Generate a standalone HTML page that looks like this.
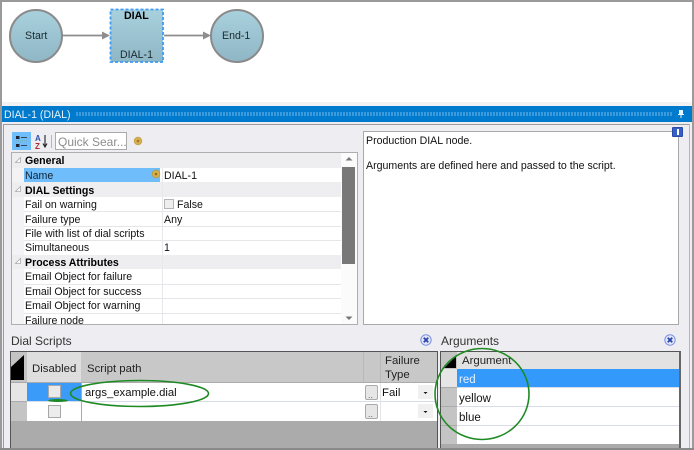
<!DOCTYPE html>
<html><head><meta charset="utf-8">
<style>
html,body{margin:0;padding:0;background:#fff}
#r{position:relative;width:694px;height:450px;overflow:hidden;background:#eeeef2;font-family:"Liberation Sans",sans-serif;font-size:10.6px;color:#111;filter:blur(.35px)}
#r div{position:absolute;box-sizing:border-box}
.t{white-space:nowrap;line-height:14px}
.b{font-weight:bold;color:#000}
.l{background:#e6e6ea;height:1px}
.h{font-size:11.4px}
</style></head><body>
<div id="r">
<div style="left:2px;top:2px;width:690px;height:100px;background:#fff"></div>
<div style="left:2px;top:102px;width:690px;height:4px;background:#f3f3f5"></div>

<svg style="position:absolute;left:0;top:0" width="694" height="106">
<defs>
<linearGradient id="g" x1="0" y1="0" x2="0" y2="1"><stop offset="0" stop-color="#a8d0dd"/><stop offset="1" stop-color="#8fb6c4"/></linearGradient>
</defs>
<circle cx="36" cy="36" r="26" fill="url(#g)" stroke="#8a8a8a" stroke-width="2"/>
<circle cx="237" cy="36" r="26" fill="url(#g)" stroke="#8a8a8a" stroke-width="2"/>
<rect x="110.500" y="9.500" width="52.500" height="52.500" fill="url(#g)" stroke="#3b9bf5" stroke-width="1.800" stroke-dasharray="3 2"/>
<path d="M63 35.500H103" stroke="#8d8d8d" stroke-width="1.800"/>
<path d="M102 31.500L110 35.500L102 39.500Z" fill="#8d8d8d"/>
<path d="M164 35.500H204" stroke="#8d8d8d" stroke-width="1.800"/>
<path d="M203 31.500L211 35.500L203 39.500Z" fill="#8d8d8d"/>
</svg>
<div class="t" style="left:25px;top:29px;color:#1c2a30">Start</div>
<div class="t b" style="left:124px;top:9px">DIAL</div>
<div class="t" style="left:120px;top:48px;color:#1c2a30">DIAL-1</div>
<div class="t" style="left:222px;top:29px;color:#1c2a30">End-1</div>

<div style="left:2px;top:106px;width:690px;height:16px;background:#007acc"></div>
<div style="left:76px;top:112px;width:596px;height:4px;background:repeating-linear-gradient(90deg,#3b9bdc 0 2px,#007acc 2px 3px)"></div>
<div class="t" style="left:4px;top:108px;color:#e6f2fa">DIAL-1 (DIAL)</div>
<svg style="position:absolute;left:676px;top:109px" width="10" height="10"><path d="M3 1H7V5H8V6H5.500V9H4.500V6H2V5H3Z" fill="#e8f4fc"/></svg>

<div style="left:3px;top:124px;width:687px;height:1px;background:#9b9b9b"></div>
<div style="left:3px;top:124px;width:1px;height:326px;background:#9b9b9b"></div>
<div style="left:689px;top:124px;width:1px;height:326px;background:#b5b5b5"></div>

<div style="left:12px;top:132px;width:19px;height:18px;background:#70bdfb"></div>
<svg style="position:absolute;left:12px;top:132px" width="44" height="18">
<rect x="4" y="4" width="3.500" height="3" fill="#223"/><rect x="4" y="12" width="3.500" height="3" fill="#223"/>
<path d="M9 5.500H15M9 13.500H15" stroke="#345" stroke-width="1"/>
<path d="M4 8.500H15M4 10H15" stroke="#7aa" stroke-width=".6" stroke-dasharray="1 1"/>
<text x="23" y="9" font-family="Liberation Sans" font-size="8" font-weight="bold" fill="#3050a8">A</text>
<text x="23" y="17" font-family="Liberation Sans" font-size="8" font-weight="bold" fill="#a83030">Z</text>
<path d="M33 3V14M31 11.500L33 15L35 11.500" stroke="#222" stroke-width="1.100" fill="none"/>
<path d="M39.500 3V16" stroke="#aaa" stroke-width=".8"/>
</svg>
<div style="left:55px;top:132px;width:72px;height:18px;background:#fff;border:1px solid #aaa"></div>
<div class="t" style="left:58px;top:135px;font-size:12px;color:#8c8c8c">Quick Sear...</div>
<svg style="position:absolute;left:133px;top:136px" width="10" height="10"><circle cx="5" cy="5" r="3.800" fill="#d8b050" stroke="#c4a050" stroke-width=".8"/><circle cx="5" cy="5" r="1.300" fill="#a07820"/></svg>

<!-- property grid -->
<div style="left:11px;top:152px;width:347px;height:173px;background:#fff;border:1px solid #aeaeae"></div>
<div style="left:12px;top:153px;width:12px;height:171px;background:#f3f3f5"></div>
<div style="left:12px;top:153px;width:329px;height:14.500px;background:#eeeef1"></div>
<div style="left:12px;top:182px;width:329px;height:14.500px;background:#eeeef1"></div>
<div style="left:12px;top:254.500px;width:329px;height:14.500px;background:#eeeef1"></div>
<div style="left:24px;top:167.500px;width:136px;height:14.500px;background:#70bdfb"></div>
<div style="left:162px;top:167px;width:1px;height:157px;background:#e8e8ec"></div>
<div class="l" style="left:24px;top:211px;width:317px"></div>
<div class="l" style="left:24px;top:225.500px;width:317px"></div>
<div class="l" style="left:24px;top:240px;width:317px"></div>
<div class="l" style="left:24px;top:283.500px;width:317px"></div>
<div class="l" style="left:24px;top:298px;width:317px"></div>
<div class="l" style="left:24px;top:312.500px;width:317px"></div>
<svg style="position:absolute;left:14px;top:155px" width="10" height="120">
<path d="M6.500 2.500V7.500H1.500Z M6.500 31.500V36.500H1.500Z M6.500 103.500V108.500H1.500Z" fill="#fff" stroke="#aaa" stroke-width=".8"/>
</svg>
<div class="t b" style="left:25px;top:154px">General</div>
<div class="t" style="left:25px;top:169px;color:#123">Name</div>
<svg style="position:absolute;left:151px;top:169px" width="10" height="10"><circle cx="5" cy="5" r="3.800" fill="#d8b050" stroke="#b89a40" stroke-width=".8"/><circle cx="5" cy="5" r="1.300" fill="#907010"/></svg>
<div class="t" style="left:164px;top:169px">DIAL-1</div>
<div class="t b" style="left:25px;top:184px">DIAL Settings</div>
<div class="t" style="left:25px;top:198px">Fail on warning</div>
<div style="left:164px;top:199px;width:10px;height:10px;background:#eee;border:1px solid #b5b5b5"></div>
<div class="t" style="left:177px;top:198px">False</div>
<div class="t" style="left:25px;top:213px">Failure type</div>
<div class="t" style="left:164px;top:213px">Any</div>
<div class="t" style="left:25px;top:227px">File with list of dial scripts</div>
<div class="t" style="left:25px;top:241px">Simultaneous</div>
<div class="t" style="left:164px;top:241px">1</div>
<div class="t b" style="left:25px;top:256px">Process Attributes</div>
<div class="t" style="left:25px;top:270px">Email Object for failure</div>
<div class="t" style="left:25px;top:285px">Email Object for success</div>
<div class="t" style="left:25px;top:299px">Email Object for warning</div>
<div class="t" style="left:25px;top:314px">Failure node</div>
<div style="left:341px;top:153px;width:16px;height:171px;background:#fbfbfc"></div>
<div style="left:341.500px;top:167px;width:13.500px;height:97px;background:#787878"></div>
<svg style="position:absolute;left:341px;top:153px" width="16" height="171">
<path d="M4.500 7.500L8 4L11.500 7.500Z M4.500 163.500L8 167L11.500 163.500Z" fill="#777"/>
</svg>

<!-- description -->
<div style="left:363px;top:131px;width:316px;height:194px;background:#fff;border:1px solid #a8a8a8"></div>
<div class="t" style="left:366px;top:134px">Production DIAL node.</div>
<div class="t" style="left:366px;top:159px">Arguments are defined here and passed to the script.</div>
<div style="left:672px;top:127px;width:11px;height:10px;background:#3560c8;border:1px solid #2a4aa8;border-radius:1px"></div>
<div style="left:677px;top:129px;width:1.500px;height:6px;background:#fff"></div>

<!-- dial scripts -->
<div class="t" style="left:11px;top:334px;font-size:12px;color:#333">Dial Scripts</div>
<div class="t" style="left:441px;top:334px;font-size:12px;color:#333">Arguments</div>
<svg style="position:absolute;left:420px;top:334px" width="14" height="14"><circle cx="6" cy="6" r="5.200" fill="#dfe5fa" stroke="#7d90dc" stroke-width="1"/><path d="M3.800 3.800L8.200 8.200M8.200 3.800L3.800 8.200" stroke="#2a44a8" stroke-width="1.800"/></svg>
<svg style="position:absolute;left:664px;top:334px" width="14" height="14"><circle cx="6" cy="6" r="5.200" fill="#dfe5fa" stroke="#7d90dc" stroke-width="1"/><path d="M3.800 3.800L8.200 8.200M8.200 3.800L3.800 8.200" stroke="#2a44a8" stroke-width="1.800"/></svg>

<div style="left:10px;top:351px;width:428px;height:99px;background:#ababab;border:1px solid #555;border-bottom:0"></div>
<div style="left:11px;top:352px;width:16px;height:30px;background:#c4c4c4"></div>
<svg style="position:absolute;left:11px;top:352px" width="14" height="28"><path d="M0 28V15L13 3V28Z" fill="#000"/><rect x="0" y="15" width="13" height="13" fill="#000"/></svg>
<div style="left:27px;top:352px;width:54px;height:30px;background:#dedede"></div>
<div style="left:81px;top:352px;width:356px;height:30px;background:#c8c8c8"></div>
<div style="left:363px;top:352px;width:1px;height:30px;background:#b8b8b8"></div>
<div style="left:380px;top:352px;width:1px;height:30px;background:#b8b8b8"></div>
<div class="t h" style="left:32px;top:362px;color:#222">Disabled</div>
<div class="t h" style="left:87px;top:362px;color:#222">Script path</div>
<div class="t h" style="left:385px;top:354px;color:#222;line-height:14px">Failure<br>Type</div>

<div style="left:11px;top:383px;width:16px;height:18px;background:#e6e6e6"></div>
<div style="left:11px;top:402px;width:16px;height:19px;background:#c4c4c4"></div>
<div style="left:27px;top:383px;width:54px;height:18px;background:#3b9bf8"></div>
<div style="left:27px;top:402px;width:54px;height:19px;background:#fff"></div>
<div style="left:82px;top:383px;width:355px;height:18px;background:#fff"></div>
<div style="left:82px;top:402px;width:355px;height:19px;background:#fff"></div>
<div style="left:27px;top:401px;width:410px;height:1px;background:#d8dce8"></div>
<div style="left:48px;top:385px;width:13px;height:13px;background:#e9e9e9;border:1px solid #a8a8a8"></div>
<div style="left:48px;top:405px;width:13px;height:13px;background:#ececec;border:1px solid #a8a8a8"></div>
<div class="t" style="left:85px;top:386px;font-size:11.300px">args_example.dial</div>
<div style="left:365px;top:385px;width:13px;height:15px;background:#e6e6e6;border:1px solid #aaa;border-radius:2px"></div>
<div style="left:365px;top:404px;width:13px;height:15px;background:#e6e6e6;border:1px solid #aaa;border-radius:2px"></div>
<div class="t" style="left:368px;top:388px;font-size:9px;color:#666">..</div>
<div class="t" style="left:368px;top:407px;font-size:9px;color:#666">..</div>
<div style="left:380px;top:383px;width:1px;height:38px;background:#e4e4e8"></div>
<div class="t h" style="left:382px;top:386px">Fail</div>
<div style="left:418px;top:385px;width:15px;height:14px;background:#f0f0f0"></div>
<div style="left:418px;top:404px;width:15px;height:14px;background:#f0f0f0"></div>
<svg style="position:absolute;left:418px;top:385px" width="15" height="34"><path d="M5.500 7H9.500L7.500 9Z M5.500 26H9.500L7.500 28Z" fill="#111"/></svg>

<!-- arguments -->
<div style="left:440px;top:351px;width:241px;height:99px;background:#ababab;border:1px solid #555;border-bottom:0;border-right:2px solid #666"></div>
<div style="left:441px;top:352px;width:238px;height:17px;background:#e2e2e2"></div>
<div style="left:441px;top:352px;width:16px;height:17px;background:#c4c4c4"></div>
<svg style="position:absolute;left:444px;top:354px" width="13" height="15"><path d="M0 14L12 2V14Z" fill="#000"/></svg>
<div class="t h" style="left:462px;top:354px;color:#222">Argument</div>
<div style="left:441px;top:369px;width:16px;height:18px;background:#e6e6e6"></div>
<div style="left:441px;top:388px;width:16px;height:18px;background:#c4c4c4"></div>
<div style="left:441px;top:407px;width:16px;height:18px;background:#c4c4c4"></div>
<div style="left:441px;top:426px;width:16px;height:18px;background:#c4c4c4"></div>
<div style="left:457px;top:369px;width:222px;height:18px;background:#3399fb"></div>
<div style="left:457px;top:388px;width:222px;height:18px;background:#fff"></div>
<div style="left:457px;top:407px;width:222px;height:18px;background:#fff"></div>
<div style="left:457px;top:426px;width:222px;height:18px;background:#fff"></div>
<div style="left:457px;top:387px;width:222px;height:1px;background:#d8dce8"></div>
<div style="left:457px;top:406px;width:222px;height:1px;background:#d8dce8"></div>
<div style="left:457px;top:425px;width:222px;height:1px;background:#d8dce8"></div>
<div class="t" style="left:459px;top:373px;font-size:11.500px;color:#e8f2fc">red</div>
<div class="t" style="left:459px;top:392px;font-size:11.500px">yellow</div>
<div class="t" style="left:459px;top:411px;font-size:11.500px">blue</div>

<svg style="position:absolute;left:0;top:330px" width="694" height="120">
<ellipse cx="139.500" cy="63.500" rx="69" ry="13" fill="none" stroke="#1f8a24" stroke-width="1.600"/>
<ellipse cx="58" cy="70.500" rx="10" ry="1.500" fill="#1f8a24"/>
<ellipse cx="482" cy="64" rx="47" ry="45.500" fill="none" stroke="#1f8a24" stroke-width="1.600"/>
</svg>

<!-- outer frame -->
<div style="left:0;top:0;width:694px;height:2px;background:#9a9a9a"></div>
<div style="left:0;top:0;width:2px;height:450px;background:#9a9a9a"></div>
<div style="left:692px;top:0;width:2px;height:450px;background:#9a9a9a"></div>
<div style="left:0;top:448px;width:694px;height:2px;background:#8a8a8a"></div>
</div>
</body></html>
